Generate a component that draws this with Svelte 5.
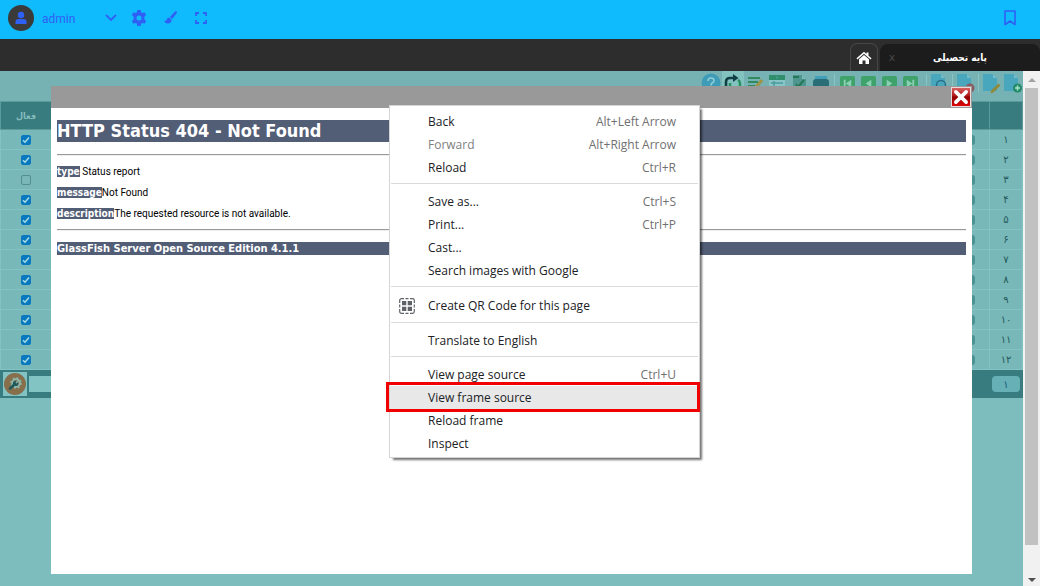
<script lang="ts">
  const rows = ['۱', '۲', '۳', '۴', '۵', '۶', '۷', '۸', '۹', '۱۰', '۱۱', '۱۲'].map((n, i) => ({
    n,
    active: i !== 2,
  }));

  const groups = [
    [
      { label: 'Back', keys: 'Alt+Left Arrow' },
      { label: 'Forward', keys: 'Alt+Right Arrow', disabled: true },
      { label: 'Reload', keys: 'Ctrl+R' },
    ],
    [
      { label: 'Save as...', keys: 'Ctrl+S' },
      { label: 'Print...', keys: 'Ctrl+P' },
      { label: 'Cast...' },
      { label: 'Search images with Google' },
    ],
    [{ label: 'Create QR Code for this page', qr: true }],
    [{ label: 'Translate to English' }],
    [
      { label: 'View page source', keys: 'Ctrl+U' },
      { label: 'View frame source', current: true },
      { label: 'Reload frame' },
      { label: 'Inspect' },
    ],
  ];

  const nav = [
    { name: 'First', d: 'M4 4h2v8H4zM12 4v8L6 8z' },
    { name: 'Previous', d: 'M11 4v8L5 8z' },
    { name: 'Next', d: 'M5 4v8l6-4z' },
    { name: 'Last', d: 'M10 4h2v8h-2zM4 4v8l6-4z' },
  ];
</script>

{#snippet sheet()}
  <path d="M1 1h10l4 4v13H1z" fill="#48a6bd" /><path d="M11 1v4h4z" fill="#74bccb" />
{/snippet}

<div class="page">
  <header class="topbar">
    <button class="avatar" aria-label="Profile">
      <svg width="12" height="14" viewBox="0 0 12 14"><circle cx="6" cy="4" r="3.2" /><path d="M.5 13v-2.200Q.5 8 3.500 8h5q3 0 3 2.800V13z" /></svg>
    </button>
    <span class="user">admin</span>
    <button class="chev" aria-label="Account menu">
      <svg width="12" height="8" viewBox="0 0 12 8"><path d="M1.500 1.500 6 6l4.500-4.500" fill="none" stroke="#2f60f5" stroke-width="1.800" stroke-linecap="round" /></svg>
    </button>
    <button class="gear" aria-label="Settings">
      <svg width="16" height="16" viewBox="0 0 16 16">
        <path fill-rule="evenodd" d="M6.300 0h3.400l.4 2.300 1.200.7 2.200-.8 1.700 2.900-1.800 1.500v2.800l1.800 1.500-1.700 2.900-2.200-.8-1.200.7-.4 2.300H6.300l-.4-2.300-1.200-.7-2.200.8L.8 10.900l1.800-1.500V6.600L.8 5.100l1.700-2.900 2.200.8 1.200-.7zM8 5.500a2.500 2.500 0 1 0 0 5 2.500 2.500 0 0 0 0-5z" />
      </svg>
    </button>
    <button class="brush" aria-label="Theme">
      <svg width="13" height="13" viewBox="0 0 13 13"><path d="M12.600.4c.7.7.2 1.500-.2 2L8.300 8 5.900 5.900 10.800.7c.5-.5 1.200-.9 1.800-.3zM5.200 6.600l2.400 2.200c.1 2.500-1.500 3.700-3.800 3.700C1.600 12.500.5 11.200.3 9.500c1.400.7 2 .2 2.400-1 .4-1.100 1.200-1.900 2.500-1.900z" /></svg>
    </button>
    <button class="full" aria-label="Full screen">
      <svg width="12" height="12" viewBox="0 0 12 12"><path d="M1 4V1h3M8 1h3v3M11 8v3H8M4 11H1V8" fill="none" stroke="#2f60f5" stroke-width="1.800" /></svg>
    </button>
    <button class="mark" aria-label="Bookmarks">
      <svg width="12" height="16" viewBox="0 0 12 16"><path d="M1 1h10v13.500L6 11l-5 3.500z" fill="none" stroke="#2f60f5" stroke-width="1.600" stroke-linejoin="round" /></svg>
    </button>
  </header>

  <nav class="tabs">
    <a class="home" href="#home" aria-label="Home">
      <svg width="16" height="14" viewBox="0 0 16 14"><path d="M8 .8l2.500 2.200V1.500h2v3.200L15.500 7.300l-.9 1.100L8 2.700 1.400 8.400.5 7.300z" fill="#fff" /><path d="M8 4l5 4.300V13H9.500V9.500h-3V13H3V8.300z" fill="#fff" /></svg>
    </a>
    <div class="tab">
      <button class="tabx" aria-label="Close tab">x</button>
      <span dir="rtl">پایه تحصیلی</span>
    </div>
  </nav>

  <main>
    <div class="work">
      <div class="tools">
        <div class="files">
          <button aria-label="Help"><svg width="20" height="20" viewBox="0 0 20 20"><circle cx="10" cy="10" r="9.500" fill="#3f9cb9" /><path d="M7 8q0-3 3-3t3 2.500q0 1.500-1.500 2.300T10 12.500M10 14v1.800" fill="none" stroke="#8fcbd6" stroke-width="1.600" /></svg></button>
          <button class="lit" aria-label="Refresh"><svg width="18" height="18" viewBox="0 0 18 18"><path d="M2 13V8q0-4 4-4h4" fill="none" stroke="#123f43" stroke-width="2.600" /><path d="M9 0l5.500 4L9 8z" fill="#123f43" /><path d="M14 6q2 1 2 4v3q0 3-3 3H8q-2 0-2-4V9" fill="none" stroke="#299160" stroke-width="2.500" /></svg></button>
          <button aria-label="Notes"><svg width="16" height="18" viewBox="0 0 16 18"><path d="M1 4h12M1 8h10M1 12h7" stroke="#33895f" stroke-width="2" /><path d="M15 6l-6 7" stroke="#9d9448" stroke-width="3" /></svg></button>
          <button aria-label="Grid"><svg width="16" height="18" viewBox="0 0 16 18"><path d="M0 1h16v16H0z" fill="#87c5c6" /><path d="M0 1h16v5H0z" fill="#2f8f6c" /><path d="M7 3.500h2M2 9h12M2 13h12M5 7v10" stroke="#4c9c9c" stroke-width="1.500" /></svg></button>
          <button aria-label="Export"><svg width="15" height="18" viewBox="0 0 15 18"><path d="M1 1h9l4 4v12H1z" fill="#4f9690" /><path d="M1 3h6M4 10l2 3 6-7" fill="none" stroke="#257856" stroke-width="2" /><path d="M10 1v4h4z" fill="#7fbcb8" /></svg></button>
          <button aria-label="Print"><svg width="18" height="18" viewBox="0 0 18 18"><path d="M3 2h12v5H3z" fill="#419fba" /><path d="M1 8q0-3 3-3h10q3 0 3 3v7H1z" fill="#296e77" /></svg></button>
        </div>
        <i></i>
        <div class="pager">
          {#each nav as b}
            <button aria-label={b.name}><svg width="15" height="15" viewBox="0 0 16 16"><rect width="16" height="16" rx="2" fill="#3fa26a" /><path d={b.d} fill="#8bd0b4" /></svg></button>
          {/each}
        </div>
        <i></i>
        <button aria-label="Search"><svg width="20" height="20" viewBox="0 0 20 20">{@render sheet()}<circle cx="11" cy="12" r="4.500" fill="none" stroke="#286f86" stroke-width="1.500" /></svg></button>
        <i></i>
        <button aria-label="Delete"><svg width="20" height="20" viewBox="0 0 20 20">{@render sheet()}<circle cx="14" cy="15" r="4.500" fill="#8a5c62" /></svg></button>
        <i></i>
        <button aria-label="Edit"><svg width="20" height="20" viewBox="0 0 20 20">{@render sheet()}<path d="M16.500 10.500l2 2-7 7-3 .8.800-3z" fill="#8f8a3c" /></svg></button>
        <button aria-label="Add"><svg width="20" height="20" viewBox="0 0 20 20">{@render sheet()}<circle cx="14.500" cy="15" r="4.500" fill="#238b67" /><path d="M12 15h5M14.500 12.500v5" stroke="#a4dfc8" stroke-width="1.600" /></svg></button>
      </div>

      <table dir="rtl">
        <thead>
          <tr><th class="num"></th><th></th><th class="act">فعال</th></tr>
        </thead>
        <tbody>
          {#each rows as r}
            <tr>
              <td class="num">{r.n}</td>
              <td class="mid"><span class="pill"></span></td>
              <td class="act"><input type="checkbox" checked={r.active} aria-label="فعال" /></td>
            </tr>
          {/each}
        </tbody>
      </table>

      <div class="foot">
        <button class="wrench" aria-label="Grid settings">
          <svg width="24" height="24" viewBox="0 0 24 24">
            <circle cx="12" cy="12" r="11" fill="#876f4c" />
            <circle cx="13" cy="11" r="3.800" fill="none" stroke="#8fb9ae" stroke-width="1.800" /><circle cx="13" cy="11" r="5" fill="none" stroke="#8fb9ae" stroke-width="1.500" stroke-dasharray="2 1.900" />
            <path d="M7 16.500l5-4.500" stroke="#1f595c" stroke-width="2.600" stroke-linecap="round" /><circle cx="12.500" cy="11.500" r="2.600" fill="#1f595c" /><path d="M13 11l2.500-2.500" stroke="#8fb9ae" stroke-width="1.400" />
          </svg>
        </button>
        <input type="text" aria-label="Filter" />
        <button class="pg">۱</button>
      </div>

      <section class="dialog" aria-label="HTTP Status 404">
        <div class="bar">
          <button class="close" aria-label="Close"><svg width="16" height="16" viewBox="0 0 14 14"><path d="M2.500 2.500l9 9M11.500 2.500l-9 9" stroke="#fff" stroke-width="3.200" stroke-linecap="round" /></svg></button>
        </div>
        <div class="doc">
          <h1>HTTP Status 404 - Not Found</h1>
          <hr />
          <p><b>type</b> Status report</p>
          <p><b>message</b>Not Found</p>
          <p><b>description</b>The requested resource is not available.</p>
          <hr />
          <h3>GlassFish Server Open Source Edition 4.1.1</h3>
        </div>
      </section>
    </div>

    <div class="scroll" aria-hidden="true">
      <svg width="17" height="17" viewBox="0 0 17 17"><path d="M5 11l4-4 4 4z" fill="#a3a3a3" /></svg>
      <div class="track"><div class="thumb"></div></div>
      <svg width="17" height="17" viewBox="0 0 17 17"><path d="M5 9l4 4 4-4z" fill="#505050" /></svg>
    </div>
  </main>

  <div class="menu" role="menu">
    {#each groups as g, i}
      {#if i > 0}<div class="sep" role="separator"></div>{/if}
      {#each g as m}
        <button role="menuitem" class:tall={m.qr} class:current={m.current} disabled={m.disabled}>
          <span class="ico">
            {#if m.qr}
              <svg width="16" height="16" viewBox="0 0 16 16">
                <path d="M.7 5V2.500Q.7.700 2.500.7H5M6.500.7h3M11 .7h2.500q1.800 0 1.800 1.800V5M15.300 6.500v3M15.300 11v2.500q0 1.800-1.800 1.800H11M9.500 15.300h-3M5 15.300H2.500q-1.800 0-1.800-1.800V11M.7 9.500v-3" fill="none" stroke="#5f6368" stroke-width="1.200" />
                <path d="M3 3h4.300v4.300H3zM8.700 3H13v4.300H8.700zM3 8.700h4.300V13H3zM8.700 8.700H13V13H8.700z" fill="#5f6368" />
              </svg>
            {/if}
          </span>
          <span class="lbl">{m.label}</span>
          {#if m.keys}<span class="keys">{m.keys}</span>{/if}
        </button>
      {/each}
    {/each}
  </div>
</div>

<style>
  :global(body) { margin: 0; }
  .page {
    position: relative;
    display: flex;
    flex-direction: column;
    min-height: 100vh;
    font-family: "DejaVu Sans", sans-serif;
  }
  button {
    display: flex;
    align-items: center;
    justify-content: center;
    padding: 0;
    border: 0;
    background: none;
    color: inherit;
    font: inherit;
  }
  svg { display: block; flex: none; }

  .topbar {
    display: flex;
    align-items: center;
    box-sizing: border-box;
    height: 39px;
    padding: 0 24px 4px 8px;
    background: #10bbfd;
    color: #2f60f5;
    fill: #2f60f5;
    font: 12px Roboto, sans-serif;
  }
  .avatar { width: 26px; height: 26px; border-radius: 50%; background: #3a3a3a; }
  .user { width: 47px; padding: 2px 8px 0; }
  .chev { margin-left: 8px; }
  .gear { margin-left: 14px; }
  .brush { margin-left: 17px; }
  .full { margin-left: 18px; }
  .mark { margin-left: auto; }

  .tabs {
    display: flex;
    align-items: flex-end;
    justify-content: flex-end;
    gap: 2px;
    height: 32px;
    background: #2d2d2d;
  }
  .home {
    display: flex;
    align-items: center;
    justify-content: center;
    width: 26px;
    height: 27px;
    border: 1px solid #474747;
    border-bottom: 0;
    border-radius: 7px 7px 0 0;
  }
  .tab {
    display: flex;
    align-items: center;
    width: 160px;
    height: 27px;
    border-radius: 8px 8px 0 0;
    background: #1c1c1c;
    color: #fff;
    font-weight: bold;
  }
  .tab span { flex: 1; padding-right: 24px; text-align: center; font-family: "DejaVu Sans Condensed", "DejaVu Sans", sans-serif; font-size: 10px; }
  .tabx { width: 24px; color: #484848; font: 11px "DejaVu Sans", sans-serif; }

  main { display: flex; flex: 1; }
  .work { position: relative; flex: 1; background: #7dbdbd; }
  .tools {
    display: flex;
    justify-content: flex-end;
    height: 30px;
    background: #76b2b3;
  }
  .tools button { width: 21px; height: 24px; }
  .tools i { align-self: flex-start; width: 1px; height: 18px; margin: 3px 2px; background: #8cc4c4; }
  .files, .pager { display: flex; }
  .files button { width: 22px; }
  .files .lit { background: #82c2bf; }
  .pager { margin-right: 3px; }

  table { width: 100%; table-layout: fixed; border-collapse: collapse; color: #24585b; font-size: 10px; }
  th, td { box-sizing: border-box; padding: 0; text-align: center; }
  th { height: 28px; border: 1px solid #5b9b9c; background: #397c80; color: #86bdbd; font: bold 9px "DejaVu Sans Condensed", "DejaVu Sans", sans-serif; }
  td { height: 20px; border: 1px solid #83c3c3; background: #78b8b8; line-height: 12px; }
  .num { width: 33px; }
  .act { width: 51px; }
  .mid { text-align: right; }
  .pill { display: block; width: 24px; height: 10px; margin-right: 14px; border-radius: 3px; background: #4b9294; }
  td input {
    display: block;
    appearance: none;
    width: 10px;
    height: 10px;
    margin: 0 auto;
    border: 1px solid #548f90;
    border-radius: 2px;
    box-sizing: border-box;
  }
  td input:checked {
    border-color: #0a78be;
    background: #0a78be url("data:image/svg+xml,%3Csvg xmlns='http://www.w3.org/2000/svg' viewBox='0 0 8 8'%3E%3Cpath d='M1 4.200l2 2L7 1.500' fill='none' stroke='%23a5dce4' stroke-width='1.500'/%3E%3C/svg%3E");
  }

  .foot {
    display: flex;
    align-items: center;
    height: 28px;
    padding: 0 3px;
    background: #397c80;
  }
  .wrench { width: 24px; height: 24px; background: #82c2c2; }
  .foot input { flex: 1; height: 16px; margin: 0 30px 0 2px; padding: 0; border: 0; background: #82c4c4; }
  .pg { width: 28px; height: 16px; border-radius: 4px; background: #66b0b6; color: #1a5a78; font-size: 10px; }

  .dialog {
    position: absolute;
    inset: 15px 51px 12px 51px;
    background: #fff;
    color: #000;
    font: 10px/12px Roboto, sans-serif;
  }
  .bar { display: flex; align-items: center; justify-content: flex-end; height: 22px; padding-right: 1px; background: #999; }
  .close {
    width: 20px;
    height: 20px;
    border: 1px solid #e6dada;
    background: linear-gradient(#d86060, #b01414 45%, #8c0000 50%, #e00808);
  }
  .doc { padding: 12px 6px; }
  h1, h3, b { background: #525d76; color: #fff; font-family: "DejaVu Sans Condensed", "DejaVu Sans", sans-serif; }
  h1 { margin: 0; font-size: 18px; line-height: 22px; }
  h3 { margin: 0; font-size: 11px; line-height: 13px; }
  hr { height: 1px; margin: 12px 0 10px; border: 0; border-top: 1px solid #999; background: #eee; }
  p { margin: 0 0 9px; }
  p + hr { margin: 9px 0 11px; }

  .scroll { display: flex; flex-direction: column; width: 17px; background: #f1f1f1; }
  .track { display: flex; flex: 1; flex-direction: column; padding: 0 2px; }
  .thumb { flex: 0 0 95%; background: #c1c1c1; }

  .menu {
    position: absolute;
    top: 105px;
    left: 389px;
    box-sizing: border-box;
    width: 311px;
    padding: 4px 0 2px;
    border: 1px solid #d4d4d4;
    background: #fff;
    box-shadow: 3px 3px 2px -1px rgba(0, 0, 0, 0.55);
    color: #202124;
    font: 12px "Open Sans", sans-serif;
  }
  .menu button {
    position: relative;
    justify-content: flex-start;
    width: 100%;
    height: 23px;
    padding-right: 23px;
  }
  .menu .tall { height: 25px; }
  .menu button:disabled { color: #808080; }
  .ico { width: 29px; padding-left: 9px; text-align: left; }
  .lbl { flex: 1; text-align: left; }
  .keys { color: #707070; }
  .sep { height: 1px; margin: 4px 1px 6px; background: #dadada; }
  .current { background: #e8e8e8; }
  .current::after {
    position: absolute;
    inset: -4px -1px -3px -4px;
    border: 3px solid #f00000;
    content: "";
  }
</style>
